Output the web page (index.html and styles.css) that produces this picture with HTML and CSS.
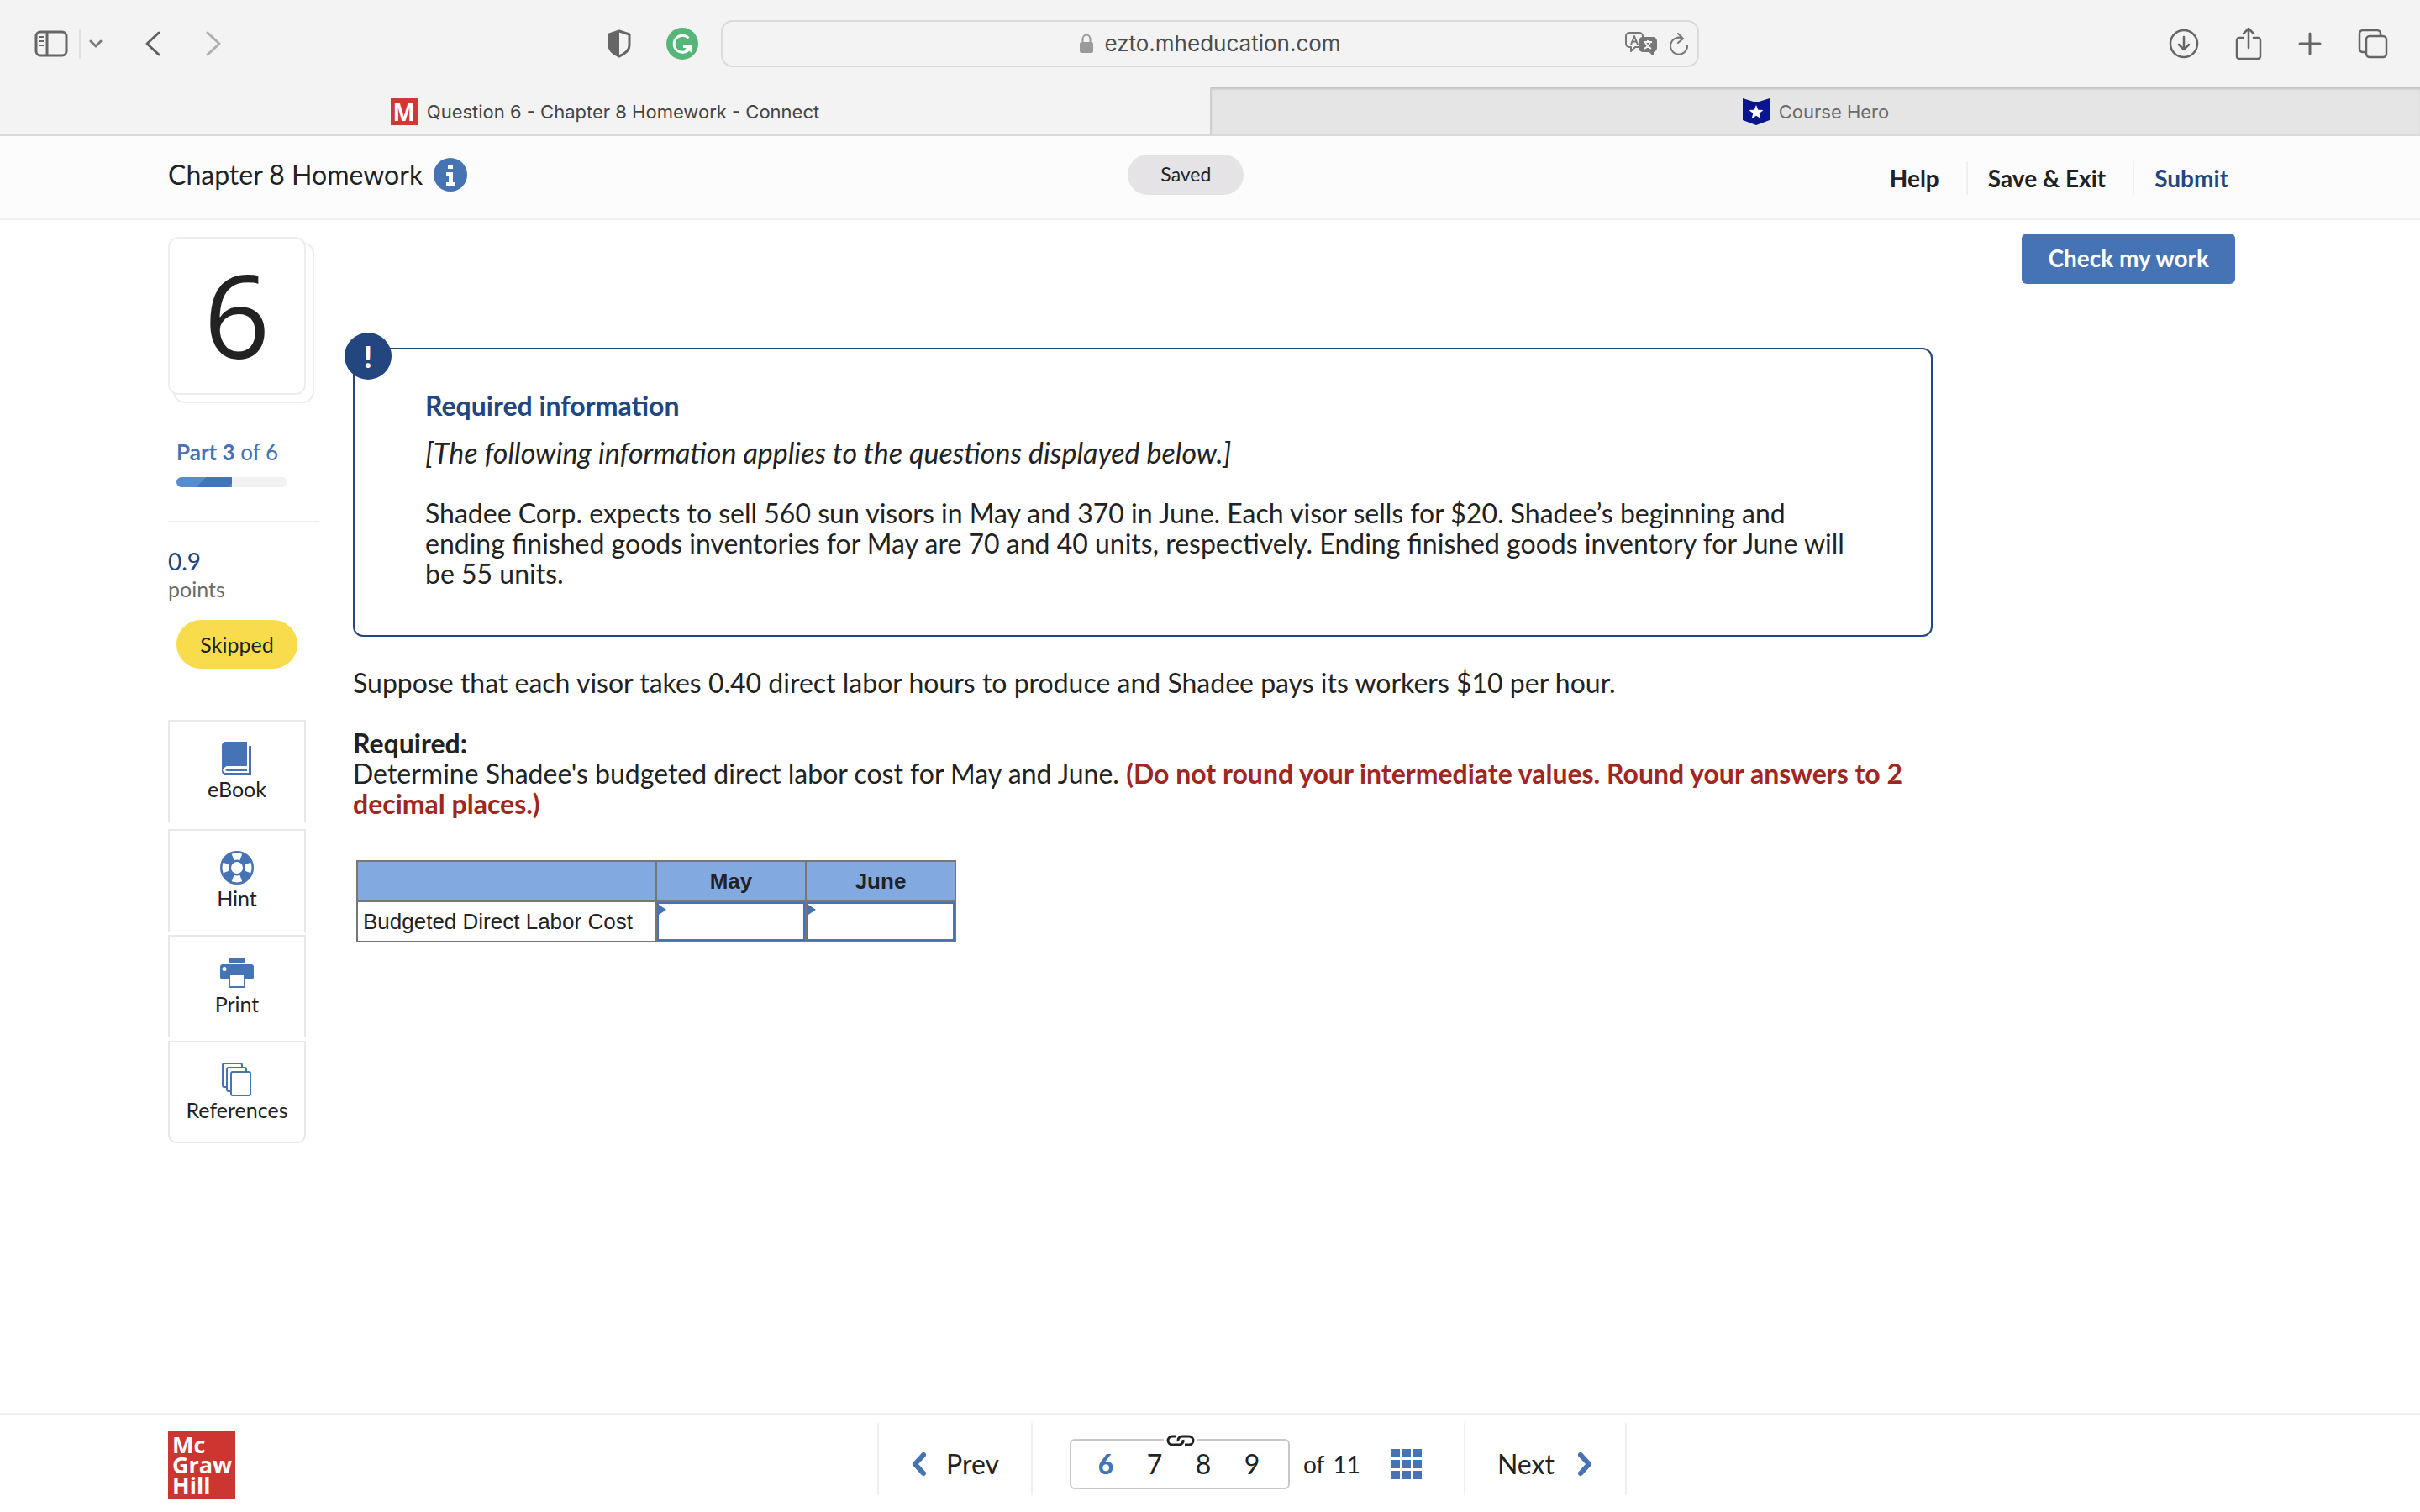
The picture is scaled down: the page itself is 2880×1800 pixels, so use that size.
FILE: index.html
```html
<!DOCTYPE html>
<html lang="en">
<head>
  <meta charset="UTF-8">
  <meta name="viewport" content="width=device-width, initial-scale=1.0">
  <title>Question 6 - Chapter 8 Homework - Connect</title>
  <link rel="stylesheet" href="styles.css">
</head>
<body>
  <!-- Browser toolbar -->
  <div class="toolbar">
    <div class="toolbar-left">
      <button class="icon-button" aria-label="Show sidebar">
        <svg width="40" height="32" viewBox="0 0 40 32" fill="none" stroke="#666" stroke-width="3">
          <rect x="2" y="2" width="36" height="28" rx="5"/>
          <path d="M15 2v28"/>
          <path d="M6 8h5M6 13h5M6 18h5" stroke-width="2"/>
        </svg>
      </button>
      <span class="toolbar-divider"></span>
      <button class="icon-button" aria-label="Tab groups">
        <svg width="16" height="12" viewBox="0 0 16 12" fill="none" stroke="#7a7a80" stroke-width="3" stroke-linecap="round" stroke-linejoin="round"><path d="M2 3l6 6 6-6"/></svg>
      </button>
      <button class="icon-button back" aria-label="Back">
        <svg width="20" height="32" viewBox="0 0 20 32" fill="none" stroke="#5f5f5f" stroke-width="3" stroke-linecap="round" stroke-linejoin="round"><path d="M17 3L3 16l14 13"/></svg>
      </button>
      <button class="icon-button forward" aria-label="Forward">
        <svg width="20" height="32" viewBox="0 0 20 32" fill="none" stroke="#b0b0b0" stroke-width="3" stroke-linecap="round" stroke-linejoin="round"><path d="M3 3l14 13L3 29"/></svg>
      </button>
      <button class="icon-button shield" aria-label="Privacy report">
        <svg width="28" height="34" viewBox="0 0 28 34">
          <path d="M14 2L26 6v13c0 6-5 10-12 13C7 29 2 25 2 19V6z" fill="none" stroke="#666" stroke-width="3" stroke-linejoin="round"/>
          <path d="M14 2v30C7 29 2 25 2 19V6z" fill="#666"/>
        </svg>
      </button>
      <button class="icon-button" aria-label="Grammar check">
        <svg width="38" height="38" viewBox="0 0 38 38">
          <circle cx="19" cy="19" r="19" fill="#56b679"/>
          <path d="M26.500 12.500A10 10 0 1 0 27 25.500" fill="none" stroke="#fff" stroke-width="3"/>
          <path d="M20 21h10v9l-3-3-3 2-2-3 2-2h-4z" fill="#fff"/>
        </svg>
      </button>
    </div>
    <div class="address-bar">
      <svg width="18" height="24" viewBox="0 0 18 24">
        <path d="M4.500 11V7a4.500 5.500 0 0 1 9 0v4" fill="none" stroke="#9a9a9a" stroke-width="2"/>
        <rect x="1" y="10" width="16" height="13" rx="2.500" fill="#9a9a9a"/>
      </svg>
      <span>ezto.mheducation.com</span>
      <div class="address-actions">
        <button class="icon-button" aria-label="Translate">
          <svg width="38" height="28" viewBox="0 0 38 28" fill="none" stroke="#777" stroke-width="2" stroke-linejoin="round">
            <path d="M16 18h-4l-5 5v-5H5a4 4 0 0 1-4-4V5a4 4 0 0 1 4-4h12a4 4 0 0 1 4 4v2"/>
            <path d="M7 15l4-10 4 10M8.500 11.500h5"/>
            <path d="M21 7h12a4 4 0 0 1 4 4v8a4 4 0 0 1-4 4v4l-4-4h-8a4 4 0 0 1-4-4v-8a4 4 0 0 1 4-4z" fill="#777"/>
            <path d="M22 12h10M27 10v2M30 12c-1 4-4 6-7 8M24 12c1 4 4 6 7 8" stroke="#f3f3f3"/>
          </svg>
        </button>
        <button class="icon-button" aria-label="Reload">
          <svg width="24" height="28" viewBox="0 0 24 28" fill="none" stroke="#777" stroke-width="2" stroke-linecap="round" stroke-linejoin="round"><path d="M17 8a10 10 0 1 0 5 8M11 2l6 6-6 5"/></svg>
        </button>
      </div>
    </div>
    <div class="toolbar-right">
      <button class="icon-button" aria-label="Downloads">
        <svg width="36" height="36" viewBox="0 0 36 36" fill="none" stroke="#666" stroke-width="2.500" stroke-linecap="round" stroke-linejoin="round"><circle cx="18" cy="18" r="16"/><path d="M18 10v15M12 19l6 6 6-6"/></svg>
      </button>
      <button class="icon-button" aria-label="Share">
        <svg width="32" height="40" viewBox="0 0 32 40" fill="none" stroke="#666" stroke-width="2.500" stroke-linecap="round" stroke-linejoin="round"><path d="M10 13H5a3 3 0 0 0-3 3v19a3 3 0 0 0 3 3h22a3 3 0 0 0 3-3V16a3 3 0 0 0-3-3h-5M16 25V2M10 8l6-6 6 6"/></svg>
      </button>
      <button class="icon-button" aria-label="New tab">
        <svg width="28" height="28" viewBox="0 0 28 28" fill="none" stroke="#666" stroke-width="3" stroke-linecap="round"><path d="M14 2v24M2 14h24"/></svg>
      </button>
      <button class="icon-button" aria-label="Tab overview">
        <svg width="36" height="36" viewBox="0 0 36 36" fill="none" stroke="#666" stroke-width="2.500"><path d="M9 28H6a4 4 0 0 1-4-4V6a4 4 0 0 1 4-4h17a4 4 0 0 1 4 4v3"/><rect x="10" y="9" width="24" height="25" rx="4"/></svg>
      </button>
    </div>
  </div>

  <div class="tabs">
    <div class="tab active">
      <span class="favicon">M</span>
      <span>Question 6 - Chapter 8 Homework - Connect</span>
    </div>
    <div class="tab">
      <svg width="32" height="32" viewBox="0 0 32 32">
        <path d="M0 0l16 5L32 0v26l-16 6-16-6z" fill="#08158f"/>
        <path d="M16 8l2.300 5.700 6.200.400-4.800 3.900 1.600 6-5.300-3.300-5.300 3.300 1.600-6-4.800-3.900 6.200-.400z" fill="#fff"/>
      </svg>
      <span>Course Hero</span>
    </div>
  </div>

  <header class="header">
    <div class="header-title">
      <h1>Chapter 8 Homework</h1>
      <button class="icon-button" aria-label="Assignment information">
        <svg width="40" height="40" viewBox="0 0 40 40"><circle cx="20" cy="20" r="20" fill="#4673b4"/><path d="M17 8h6v5h-6zM15 17h8v12h3v4H15v-4h3v-8h-3z" fill="#fff"/></svg>
      </button>
    </div>
    <span class="saved">Saved</span>
    <nav class="header-nav">
      <a href="#">Help</a>
      <a href="#">Save &amp; Exit</a>
      <a href="#" class="submit">Submit</a>
    </nav>
  </header>

  <main class="main">
    <aside class="sidebar">
      <div class="question-number">6</div>
      <div class="part">
        <p><b>Part 3</b> of 6</p>
        <div class="progress"><div class="progress-fill" style="width: 50%"></div></div>
      </div>
      <div class="points">
        <p class="points-value">0.9</p>
        <p class="points-label">points</p>
      </div>
      <span class="skipped">Skipped</span>

      <div class="tools">
        <button class="tool">
          <svg width="40" height="40" viewBox="0 0 40 40">
            <path d="M6 0h26v29H8c-3 0-4 2-4 3V4c0-2 1-4 2-4zM34 5h3v35H7c-3 0-5-2-5-5V5c0-3 2-5 5-5v30c-5 1-5 7 0 7h27z" fill="#4673b4"/>
            <path d="M8 32h24v3H8c-2 0-2-3 0-3z" fill="#4673b4"/>
          </svg>
          eBook
        </button>
        <button class="tool">
          <svg width="40" height="40" viewBox="0 0 40 40" fill="none">
            <circle cx="20" cy="20" r="13.500" stroke="#4673b4" stroke-width="13"/>
            <circle cx="20" cy="20" r="13.500" stroke="#fff" stroke-width="8" pathLength="360" stroke-dasharray="42 48" stroke-dashoffset="21"/>
          </svg>
          Hint
        </button>
        <button class="tool">
          <svg width="40" height="40" viewBox="0 0 40 40">
            <path d="M10 2h20v5H10zM3 9h34a3 3 0 0 1 3 3v12a3 3 0 0 1-3 3h-7v10H10V27H3a3 3 0 0 1-3-3V12a3 3 0 0 1 3-3z" fill="#4673b4"/>
            <path d="M12 22h16v13H12z" fill="#fff"/>
            <circle cx="5" cy="14.500" r="2.500" fill="#fff"/>
          </svg>
          Print
        </button>
        <button class="tool">
          <svg width="40" height="40" viewBox="0 0 40 40" fill="#fff" stroke="#4673b4" stroke-width="2">
            <rect x="3" y="1" width="23" height="28" rx="2"/>
            <rect x="8" y="6" width="23" height="28" rx="2"/>
            <rect x="13" y="11" width="23" height="28" rx="2"/>
          </svg>
          References
        </button>
      </div>
    </aside>

    <article class="question">
      <section class="callout">
        <span class="callout-badge">!</span>
        <h2>Required information</h2>
        <p class="note">[The following information applies to the questions displayed below.]</p>
        <p>Shadee Corp. expects to sell 560 sun visors in May and 370 in June. Each visor sells for $20. Shadee’s beginning and ending finished goods inventories for May are 70 and 40 units, respectively. Ending finished goods inventory for June will be 55 units.</p>
      </section>

      <p class="prompt">Suppose that each visor takes 0.40 direct labor hours to produce and Shadee pays its workers $10 per hour.</p>
      <h3>Required:</h3>
      <p>Determine Shadee's budgeted direct labor cost for May and June. <strong class="rounding">(Do not round your intermediate values. Round your answers to 2 decimal places.)</strong></p>

      <table class="answers">
        <thead>
          <tr>
            <td class="label-col"></td>
            <th id="may" scope="col">May</th>
            <th id="june" scope="col">June</th>
          </tr>
        </thead>
        <tbody>
          <tr>
            <th id="cost" scope="row">Budgeted Direct Labor Cost</th>
            <td class="answer"><input type="text" aria-labelledby="cost may"></td>
            <td class="answer"><input type="text" aria-labelledby="cost june"></td>
          </tr>
        </tbody>
      </table>
    </article>

    <button class="check-button">Check my work</button>
  </main>

  <footer class="footer">
    <div class="logo">Mc<br>Graw<br>Hill</div>
    <nav class="pager">
      <a href="#" class="pager-link">
        <svg width="20" height="30" viewBox="0 0 20 30" fill="none" stroke="#4673b4" stroke-width="6" stroke-linecap="round" stroke-linejoin="round"><path d="M15 4L5 15l10 11"/></svg>
        Prev
      </a>
      <div class="pages">
        <div class="page-group">
          <svg class="link-icon" width="40" height="16" viewBox="0 0 40 16" fill="none" stroke="#222" stroke-width="3">
            <path d="M14 3h-4a5 5 0 0 0 0 10h8a5 5 0 0 0 5-6"/>
            <path d="M25 13h5a5 5 0 0 0 0-10h-8a5 5 0 0 0-5 6"/>
          </svg>
          <a href="#" class="current">6</a>
          <a href="#">7</a>
          <a href="#">8</a>
          <a href="#">9</a>
        </div>
        <span class="total"><span>of</span><span>11</span></span>
        <button class="icon-button" aria-label="All questions">
          <svg width="36" height="36" viewBox="0 0 36 36" fill="#4673b4"><path d="M0 0h10v10H0zM13 0h10v10H13zM26 0h10v10H26zM0 13h10v10H0zM13 13h10v10H13zM26 13h10v10H26zM0 26h10v10H0zM13 26h10v10H13zM26 26h10v10H26z"/></svg>
        </button>
      </div>
      <a href="#" class="pager-link next">
        Next
        <svg width="20" height="30" viewBox="0 0 20 30" fill="none" stroke="#4673b4" stroke-width="6" stroke-linecap="round" stroke-linejoin="round"><path d="M5 4l10 11L5 26"/></svg>
      </a>
    </nav>
  </footer>
</body>
</html>
```
FILE: styles.css
```css
:root {
  --blue: #4673b4;
  --navy: #23467f;
  --text: #222;
  --line: #f0f0f0;
  --chrome: #f3f3f3;
}

* {
  box-sizing: border-box;
  margin: 0;
  padding: 0;
}

body {
  display: flex;
  flex-direction: column;
  min-height: 100vh;
  font-family: Lato, "Open Sans", sans-serif;
  font-size: 32px;
  line-height: 36px;
  color: var(--text);
  background: #fff;
}

a {
  color: inherit;
  text-decoration: none;
}

button {
  font-family: inherit;
  border: none;
  background: none;
  cursor: pointer;
}

svg {
  display: block;
  flex: none;
}

/* Browser toolbar */
.toolbar {
  display: grid;
  grid-template-columns: 1fr minmax(0, 1164px) 1fr;
  align-items: center;
  height: 104px;
  background: var(--chrome);
  font-family: Inter, sans-serif;
}

.toolbar-left,
.toolbar-right {
  display: flex;
  align-items: center;
}

.toolbar-left {
  padding: 0 27px 0 41px;
}

.toolbar-divider {
  width: 2px;
  height: 36px;
  margin: 0 10px 0 13px;
  background: #e2e2e2;
}

.back {
  margin-left: 50px;
}

.forward {
  margin-left: 52px;
}

.shield {
  margin: 0 42px 0 auto;
}

.toolbar-right {
  justify-content: flex-end;
  gap: 43px;
  padding-right: 38px;
}

.address-bar {
  position: relative;
  display: flex;
  align-items: center;
  justify-content: center;
  gap: 12px;
  height: 56px;
  border: 2px solid #d9d9d9;
  border-radius: 14px;
  font-size: 26px;
  color: #4c4c4c;
}

.address-actions {
  position: absolute;
  right: 10px;
  display: flex;
  gap: 14px;
}

.tabs {
  display: grid;
  grid-template-columns: 1fr 1fr;
  height: 58px;
  border-bottom: 2px solid #d9d9d9;
  background: var(--chrome);
  font-family: Inter, sans-serif;
  font-size: 22px;
}

.tab {
  display: flex;
  align-items: center;
  justify-content: center;
  gap: 11px;
  padding-top: 2px;
  color: #6b6b6b;
  background: #e5e5e5;
  border-left: 2px solid #cfcfcf;
  box-shadow: inset 0 3px 3px -1px #bfbfbf;
}

.tab.active {
  color: #444;
  background: var(--chrome);
  border-left: none;
  box-shadow: none;
}

.favicon {
  width: 32px;
  height: 32px;
  font: bold 28px/32px "Open Sans", sans-serif;
  text-align: center;
  color: #fff;
  background: #d23833;
}

/* Assignment header */
.header {
  display: grid;
  grid-template-columns: 39fr auto 40fr;
  align-items: start;
  height: 100px;
  padding: 22px 228px 0 200px;
  background: #fcfcfc;
  border-bottom: 2px solid var(--line);
}

.header-title {
  display: flex;
  align-items: center;
  gap: 13px;
  margin-top: 4px;
}

h1 {
  font-size: 32px;
  font-weight: 400;
  line-height: 36px;
}

.saved {
  padding: 0 39px 2px;
  border-radius: 24px;
  font-size: 23px;
  line-height: 46px;
  background: #e5e3e6;
}

.header-nav {
  display: flex;
  justify-content: flex-end;
  margin-top: 8px;
}

.header-nav a {
  padding: 0 32px 0 24px;
  font-size: 28px;
  font-weight: 700;
  line-height: 40px;
  border-left: 2px solid var(--line);
}

.header-nav a:first-child {
  border-left: none;
}

.header-nav .submit {
  padding-right: 0;
  color: var(--navy);
}

/* Page layout */
.main {
  flex: 1;
  display: grid;
  grid-template-columns: 220px minmax(0, 1880px) 1fr;
  align-items: start;
  padding: 16px 220px 0 200px;
}

.check-button {
  justify-self: end;
  height: 60px;
  padding: 0 31px 2px;
  border-radius: 6px;
  font-size: 28px;
  font-weight: 700;
  white-space: nowrap;
  color: #fff;
  background: var(--blue);
}

/* Left column */
.sidebar {
  width: 180px;
  padding-top: 4px;
}

.question-number {
  position: relative;
  width: 164px;
  height: 188px;
  border: 2px solid #ededed;
  border-radius: 12px;
  font-family: "Open Sans", sans-serif;
  font-size: 138px;
  line-height: 178px;
  text-align: center;
  background: #fff;
}

.question-number::before {
  content: "";
  position: absolute;
  z-index: -1;
  top: 4px;
  left: 4px;
  width: 164px;
  height: 188px;
  border: 2px solid #ededed;
  border-radius: 14px;
}

.part {
  padding: 50px 0 40px 10px;
  border-bottom: 2px solid #ededed;
  font-size: 26px;
  color: var(--blue);
}

.progress {
  width: 132px;
  height: 12px;
  margin-top: 12px;
  border-radius: 6px;
  background: #f2f2f2;
  overflow: hidden;
}

.progress-fill {
  height: 100%;
  background: linear-gradient(135deg, #568dd0 0 25px, #4076b9 25px 52px, #568dd0 52px);
}

.points {
  margin-top: 28px;
}

.points-value {
  font-size: 28px;
  color: var(--navy);
}

.points-label {
  font-size: 25px;
  line-height: 30px;
  color: #6b6b6b;
}

.skipped {
  display: block;
  width: 144px;
  margin: 22px 0 61px 10px;
  border-radius: 29px;
  font-size: 25px;
  line-height: 58px;
  text-align: center;
  background: #f8dc4b;
}

.tools {
  display: flex;
  flex-direction: column;
  gap: 4px;
  width: 164px;
}

.tool {
  display: flex;
  flex-direction: column;
  align-items: center;
  height: 122px;
  padding-top: 24px;
  border: 2px solid #e8e8e8;
  border-bottom: none;
  font-size: 25px;
  line-height: 32px;
  color: var(--text);
}

.tool:first-child {
  margin-bottom: 4px;
}

.tool:last-child {
  border-bottom: 2px solid #e8e8e8;
  border-radius: 0 0 10px 10px;
}

/* Question */
.question {
  padding-top: 136px;
}

.callout {
  position: relative;
  margin-bottom: 37px;
  padding: 49px 84px 55px;
  border: 2px solid var(--navy);
  border-radius: 12px;
}

.callout-badge {
  position: absolute;
  top: -20px;
  left: -12px;
  width: 56px;
  height: 56px;
  border-radius: 50%;
  font-size: 36px;
  font-weight: 900;
  line-height: 56px;
  text-align: center;
  color: #fff;
  background: var(--navy);
}

h2 {
  margin-bottom: 20px;
  font-size: inherit;
  color: var(--navy);
}

.note {
  margin-bottom: 36px;
  font-size: 34px;
  font-style: italic;
}

.prompt {
  margin-bottom: 36px;
}

h3 {
  font-size: inherit;
}

.rounding {
  color: #a02620;
}

.answers {
  width: 714px;
  margin: 49px 0 0 4px;
  border-collapse: collapse;
  table-layout: fixed;
  font: 26px/46px "Liberation Sans", Arial, sans-serif;
}

.answers th,
.answers td {
  height: 48px;
  border: 2px solid #767676;
}

.answers .label-col {
  width: 356px;
}

.answers thead {
  background: #83aae0;
}

.answers tbody th {
  padding-left: 6px;
  font-weight: 400;
  text-align: left;
  white-space: nowrap;
}

.answers .answer {
  position: relative;
}

.answer::before {
  content: "";
  position: absolute;
  top: 3px;
  left: 2px;
  border: 6px solid transparent;
  border-left: 9px solid var(--blue);
  border-right: none;
}

.answer input {
  display: block;
  width: 100%;
  height: 46px;
  padding: 0 12px;
  border: 2px solid var(--blue);
  font: inherit;
  background: #fff;
}

/* Footer */
.footer {
  display: flex;
  align-items: flex-start;
  height: 118px;
  padding: 10px 180px 0 200px;
  border-top: 2px solid var(--line);
}

.logo {
  width: 80px;
  height: 80px;
  margin-top: 10px;
  padding: 4px 5px;
  font: bold 27px/24px "Open Sans", sans-serif;
  color: #fff;
  background: #cd3530;
}

.pager {
  display: flex;
  margin: 0 auto;
  border-right: 2px solid var(--line);
}

.pager-link {
  display: flex;
  align-items: center;
  gap: 22px;
  height: 86px;
  padding: 12px 38px 0;
  border-left: 2px solid var(--line);
}

.pager-link.next {
  gap: 26px;
}

.pages {
  display: flex;
  align-items: center;
  padding: 12px 50px 0 44px;
  border-left: 2px solid var(--line);
}

.page-group {
  position: relative;
  display: grid;
  grid-template-columns: repeat(4, 1fr);
  width: 262px;
  padding: 0 14px 0 12px;
  border: 2px solid #c8c8c8;
  border-radius: 6px;
  font-size: 32px;
  line-height: 56px;
  text-align: center;
}

.page-group .current {
  font-weight: 900;
  color: var(--blue);
}

.link-icon {
  position: absolute;
  top: -8px;
  left: 110px;
  background: #fff;
}

.total {
  display: flex;
  gap: 10px;
  margin: 0 37px 0 16px;
  font-size: 28px;
}
```
